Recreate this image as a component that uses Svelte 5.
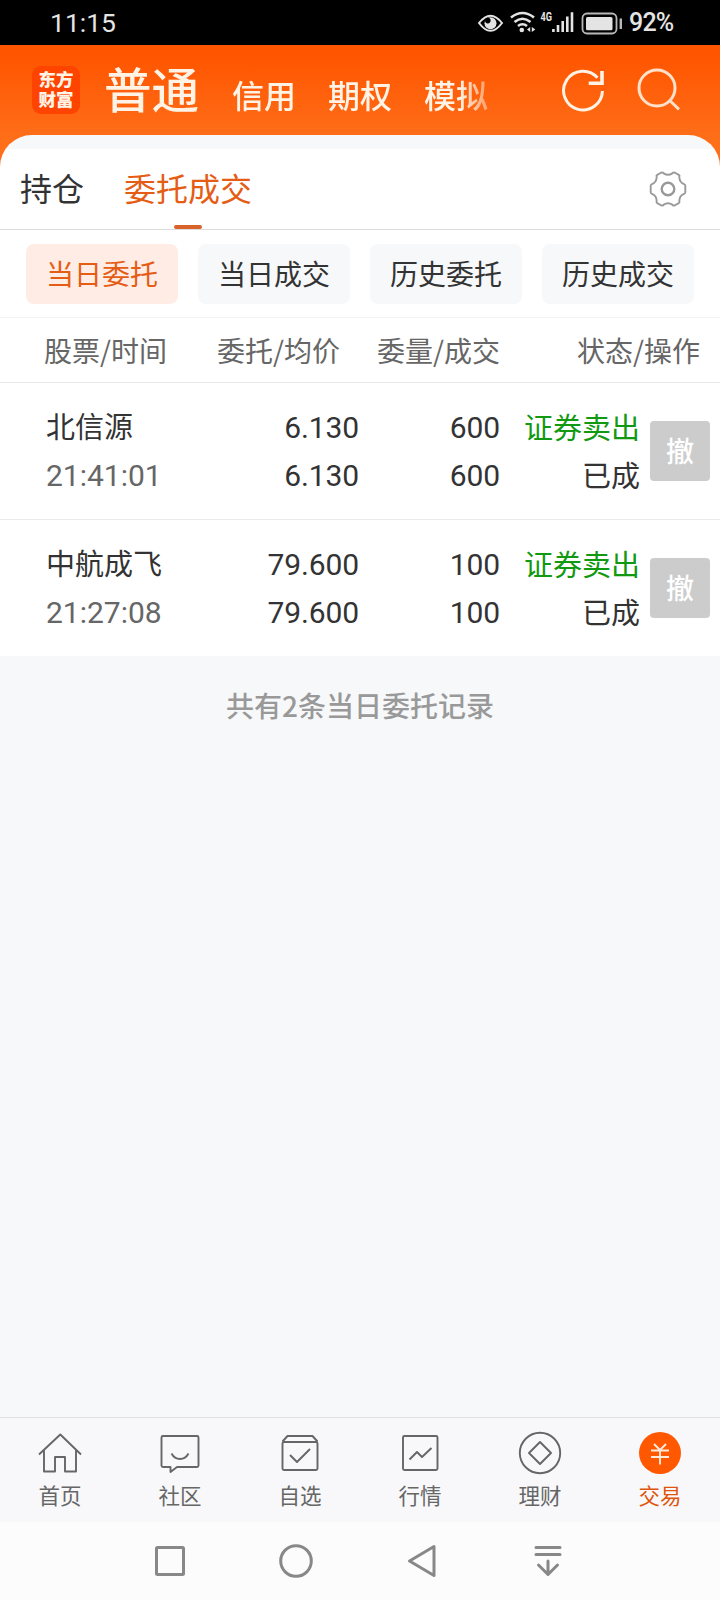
<script lang="ts">
  const accounts = ['普通', '信用', '期权', '模拟']
  const filters = ['当日委托', '当日成交', '历史委托', '历史成交']
  const tabs = ['首页', '社区', '自选', '行情', '理财', '交易']

  const orders = [
    { name: '北信源', time: '21:41:01', price: '6.130', avg: '6.130', amount: 600, done: 600 },
    { name: '中航成飞', time: '21:27:08', price: '79.600', avg: '79.600', amount: 100, done: 100 },
  ]

  let account = $state('普通')
  let filter = $state('当日委托')
  let tab = $state('交易')
</script>

<div class="phone">
  <div class="status">
    <span class="clock">11:15</span>
    <svg class="indicators" width="148" height="45" viewBox="477 0 148 45" fill="none" stroke="#e4e4e4">
      <!-- eye -->
      <path d="M479 23Q490.500 8.500 502 23Q490.500 38.500 479 23Z" stroke-width="2"/>
      <circle cx="490.500" cy="23.300" r="6" fill="#e4e4e4" stroke="none"/>
      <circle cx="487.800" cy="20.600" r="2.800" fill="#000" stroke="none"/>
      <!-- wifi -->
      <path d="M511 17.500Q522.500 8.500 534 17.500" stroke-width="2.600"/>
      <path d="M514.500 22Q522.500 15.500 530.500 22" stroke-width="2.600"/>
      <path d="M518 26Q522.500 22.500 527 26" stroke-width="2.600"/>
      <circle cx="521.800" cy="30" r="2.300" fill="#e4e4e4" stroke="none"/>
      <path d="M530.200 27v5l-3.200-2.500zM531.800 32v-5l3.500 2.500z" fill="#e4e4e4" stroke="none"/>
      <!-- signal -->
      <text x="540.500" y="21" textLength="11.500" lengthAdjust="spacingAndGlyphs">4G</text>
      <path d="M553.400 29v3M558 25v7M562.700 21v11M567.300 16.500v15.500M572 12.300v19.700" stroke-width="2.600"/>
      <!-- battery -->
      <rect x="582.500" y="13.500" width="34" height="20" rx="4.500" stroke-width="1.800" stroke="#b8b8b8"/>
      <rect x="586" y="17" width="26.500" height="13.300" rx="1.500" fill="#e4e4e4" stroke="none"/>
      <path d="M620.800 18.500v10.500" stroke-width="2.400" stroke="#b8b8b8"/>
    </svg>
    <span class="percent">92%</span>
  </div>

  <header>
    <div class="logo">东方<br>财富</div>
    <nav class="accounts">
      {#each accounts as item}
        <button class:active={account === item} onclick={() => account = item}>{item}</button>
      {/each}
    </nav>
    <svg class="refresh" width="46" height="46" viewBox="0 0 46 46" fill="none" stroke="#fff3e6" stroke-width="3">
      <path d="M42.400 25A19.400 19.400 0 1 1 37.500 11.700"/>
      <path d="M42 5v12.200h-13.300" stroke-width="3.600"/>
    </svg>
    <svg class="search" width="46" height="46" viewBox="0 0 46 46" fill="none" stroke="#ffe0c8" stroke-width="3">
      <circle cx="21" cy="22" r="18"/>
      <path d="M33.700 34.500l9.300 8.800"/>
    </svg>
  </header>

  <main>
    <div class="sections">
      <button>持仓</button>
      <button class="active">委托成交</button>
      <svg width="38" height="38" viewBox="-19 -19 38 38" fill="none" stroke="#999" stroke-linejoin="round">
        <path stroke-width="1.900" d="M-7-16.300Q-5-17.100-4.300-15.600Q0-12.800 4.300-15.600Q5-17.100 7-16.300L10.800-14.100Q12-13.300 11.300-12Q11.500-6.200 16.500-4.600Q17.300-4.300 17.300-3V3Q17.300 4.300 16.500 4.600Q11.500 6.200 11.300 12Q12 13.300 10.800 14.100L7 16.300Q5 17.100 4.300 15.600Q0 12.800-4.300 15.600Q-5 17.100-7 16.300L-10.800 14.100Q-12 13.300-11.300 12Q-11.500 6.200-16.500 4.600Q-17.300 4.300-17.300 3V-3Q-17.300-4.300-16.500-4.600Q-11.500-6.200-11.300-12Q-12-13.300-10.800-14.100Z"/>
        <circle r="6.300" stroke-width="2.400"/>
      </svg>
    </div>

    <div class="filters">
      {#each filters as item}
        <button class:active={filter === item} onclick={() => filter = item}>{item}</button>
      {/each}
    </div>

    <div class="columns">
      <span>股票/时间</span>
      <span>委托/均价</span>
      <span>委量/成交</span>
      <span>状态/操作</span>
    </div>

    {#each orders as order}
      <div class="order">
        <div class="cell name">{order.name}<br><span class="time">{order.time}</span></div>
        <div class="cell num">{order.price}<br>{order.avg}</div>
        <div class="cell num">{order.amount}<br>{order.done}</div>
        <div class="cell"><span class="sell">证券卖出</span><br>已成</div>
        <button class="cancel">撤</button>
      </div>
    {/each}
  </main>

  <p class="summary">共有2条当日委托记录</p>

  <nav class="tabbar">
    {#each tabs as item, i}
      <button class:active={tab === item} onclick={() => tab = item}>
        <svg width="44" height="44" viewBox="0 0 44 44" fill="none" stroke="#666" stroke-width="1.900" stroke-linejoin="round">
          {#if i === 0}
            <path d="M1 23.500L22.300 3.500L43 23.500M6 19.500v21h11V26h10v14.500h11V19.500"/>
          {:else if i === 1}
            <path d="M5 5h34a1.500 1.500 0 0 1 1.500 1.500v28a1.500 1.500 0 0 1-1.500 1.500H19l-6.500 5v-5H5a1.500 1.500 0 0 1-1.500-1.500v-28A1.500 1.500 0 0 1 5 5z"/>
            <path d="M13.500 22.500c4 7.300 13 7.300 17 0"/>
          {:else if i === 2}
            <path d="M4.500 10.500L9.500 5h25l5 5.500M6 11h32a1.500 1.500 0 0 1 1.500 1.500v25a1.500 1.500 0 0 1-1.500 1.500H6a1.500 1.500 0 0 1-1.500-1.500v-25A1.500 1.500 0 0 1 6 11z"/>
            <path d="M12 24l7 7l13-13"/>
          {:else if i === 3}
            <rect x="5" y="5" width="34.500" height="34" rx="1.500"/>
            <path d="M11.500 28.500l7.500-7.500l5 5l9.500-9"/>
          {:else if i === 4}
            <circle cx="22" cy="22" r="20.200"/>
            <path d="M22 11l11 11l-11 11l-11-11z"/>
          {:else}
            <circle cx="22" cy="22" r="21" fill="#ff5800" stroke="none"/>
            <path stroke="#ffe9da" d="M16 13l6 6l6-6M13 19.500h18M13 26h18M22 19.500v14"/>
          {/if}
        </svg>
        {item}
      </button>
    {/each}
  </nav>

  <div class="system">
    <svg viewBox="0 0 40 40"><rect x="6.500" y="6.500" width="27" height="27" rx="1"/></svg>
    <svg viewBox="0 0 40 40"><circle cx="20" cy="20" r="15.300"/></svg>
    <svg viewBox="0 0 40 40"><path d="M32 5.500v29L7.500 20z"/></svg>
    <svg viewBox="0 0 40 40"><path d="M8 6.500h24M8 13.500h24M20 20v13.500M10.500 24l9.500 9.500l9.500-9.500"/></svg>
  </div>
</div>

<style>
  :global(body) {
    background: #f7f8fa;
  }

  .phone {
    display: flex;
    flex-direction: column;
    width: 720px;
    height: 1600px;
    overflow: hidden;
    background: #f7f8fa;
    color: #333;
    font-family: "Noto Sans CJK SC", sans-serif;
  }

  button {
    box-sizing: border-box;
    padding: 0;
    border: 0;
    background: none;
    color: inherit;
    font: inherit;
    white-space: nowrap;
  }
  svg {
    display: block;
    flex: none;
  }


  .status {
    display: flex;
    align-items: center;
    flex: none;
    box-sizing: border-box;
    height: 45px;
    padding: 0 43px 0 50px;
    background: #000;
    color: #e4e4e4;
    font-family: Roboto, sans-serif;
    font-size: 26.5px;
    line-height: 47px;
  }
  .clock {
    flex-grow: 1;
  }
  .indicators text {
    fill: #e4e4e4;
    stroke: none;
    font-size: 12px;
    font-weight: 700;
  }
  .percent {
    width: 48px;
    margin-left: 4px;
    font-size: 25px;
    font-weight: 500;
    letter-spacing: -0.8px;
  }


  header {
    display: flex;
    flex: none;
    box-sizing: border-box;
    height: 122px;
    margin-bottom: -32px;
    padding: 21px 36px 0 32px;
    background: linear-gradient(#ff5500 8%, #ff6f1a 80%);
    color: #fff3e6;
  }
  .logo {
    flex: none;
    box-sizing: border-box;
    width: 48px;
    height: 48px;
    padding-top: 3px;
    border-radius: 9px;
    background: #ff4400;
    font-size: 17.5px;
    font-weight: 900;
    line-height: 20px;
    text-align: center;
  }
  .accounts {
    display: flex;
    align-items: baseline;
    gap: 32px;
    width: 457px;
    height: 60px;
    margin: -10px 0 0 24px;
    font-weight: 500;
    -webkit-mask-image: linear-gradient(90deg, #000 355px, transparent 405px);
    mask-image: linear-gradient(90deg, #000 355px, transparent 405px);
  }
  .accounts button {
    font-size: 32px;
    line-height: 64px;
  }
  .accounts .active {
    margin-right: 1px;
    font-size: 47.5px;
  }
  .refresh {
    margin-left: -1px;
  }
  .search {
    margin-left: 30px;
  }


  main {
    overflow: hidden;
    flex: none;
    padding-top: 14px;
    border-radius: 32px 32px 0 0;
    background: linear-gradient(#f7f8fa 14px, #fff 14px);
  }

  .sections {
    display: flex;
    align-items: center;
    gap: 40px;
    height: 80px;
    padding: 0 33px 0 20px;
    border-bottom: 1px solid #ddd;
    font-size: 32px;
  }
  .sections button {
    position: relative;
    height: 80px;
    padding-bottom: 4px;
  }
  .sections .active {
    color: #e55c14;
  }
  .sections .active::after {
    content: '';
    position: absolute;
    left: 50px;
    bottom: 0;
    width: 28px;
    height: 4px;
    border-radius: 2px;
    background: #d9622b;
  }
  .sections svg {
    margin-left: auto;
  }

  .filters {
    display: flex;
    gap: 20px;
    padding: 14px 26px 13px;
    border-bottom: 1px solid #f4f4f4;
  }
  .filters button {
    flex: 1;
    height: 60px;
    padding-bottom: 2px;
    border-radius: 8px;
    background: #f7f8fa;
    font-size: 28px;
  }
  .filters .active {
    background: #ffede5;
    color: #e55c14;
  }

  .columns {
    display: grid;
    grid-template-columns: 173px 160px 200px auto;
    height: 64px;
    padding-left: 44px;
    border-bottom: 1px solid #eaeaea;
    color: #666;
    font-size: 28px;
    line-height: 64px;
  }

  .order {
    display: grid;
    grid-template-columns: 173px 140px 141px 140px 60px;
    align-items: center;
    height: 136px;
    padding-left: 46px;
    font-size: 29px;
    line-height: 48px;
  }
  .order + .order {
    border-top: 1px solid #eaeaea;
  }
  .cell {
    margin-top: -2px;
    text-align: right;
    white-space: nowrap;
  }
  .name {
    text-align: left;
  }
  .num, .time {
    font-family: Roboto, sans-serif;
    font-size: 30px;
  }
  .num {
    margin-top: 2px;
    letter-spacing: -0.1px;
  }
  .time {
    color: #666;
  }
  .sell {
    color: #119911;
  }
  .cancel {
    width: 60px;
    height: 60px;
    margin-left: 10px;
    padding-bottom: 2px;
    border-radius: 4px;
    background: #ccc;
    color: #fff;
    font-size: 28px;
    font-weight: 500;
  }

  .summary {
    flex-grow: 1;
    margin: 29px 0 0;
    color: #999;
    font-size: 28px;
    font-weight: 500;
    line-height: 40px;
    text-align: center;
  }


  .tabbar {
    display: flex;
    flex: none;
    height: 104px;
    border-top: 1px solid #e0e0e2;
    background: #f8f8fa;
    color: #666;
  }
  .tabbar button {
    display: flex;
    flex: 1;
    flex-direction: column;
    align-items: center;
    padding-top: 13px;
    font-size: 21.5px;
    line-height: 40px;
  }
  .tabbar .active {
    color: #e0540c;
  }

  .system {
    display: flex;
    justify-content: center;
    align-items: center;
    flex: none;
    gap: 86px;
    height: 78px;
    padding-right: 2px;
    background: #fcfcfc;
  }
  .system svg {
    width: 40px;
    height: 40px;
    fill: none;
    stroke: #888;
    stroke-width: 3;
    stroke-linecap: round;
    stroke-linejoin: round;
  }
</style>
